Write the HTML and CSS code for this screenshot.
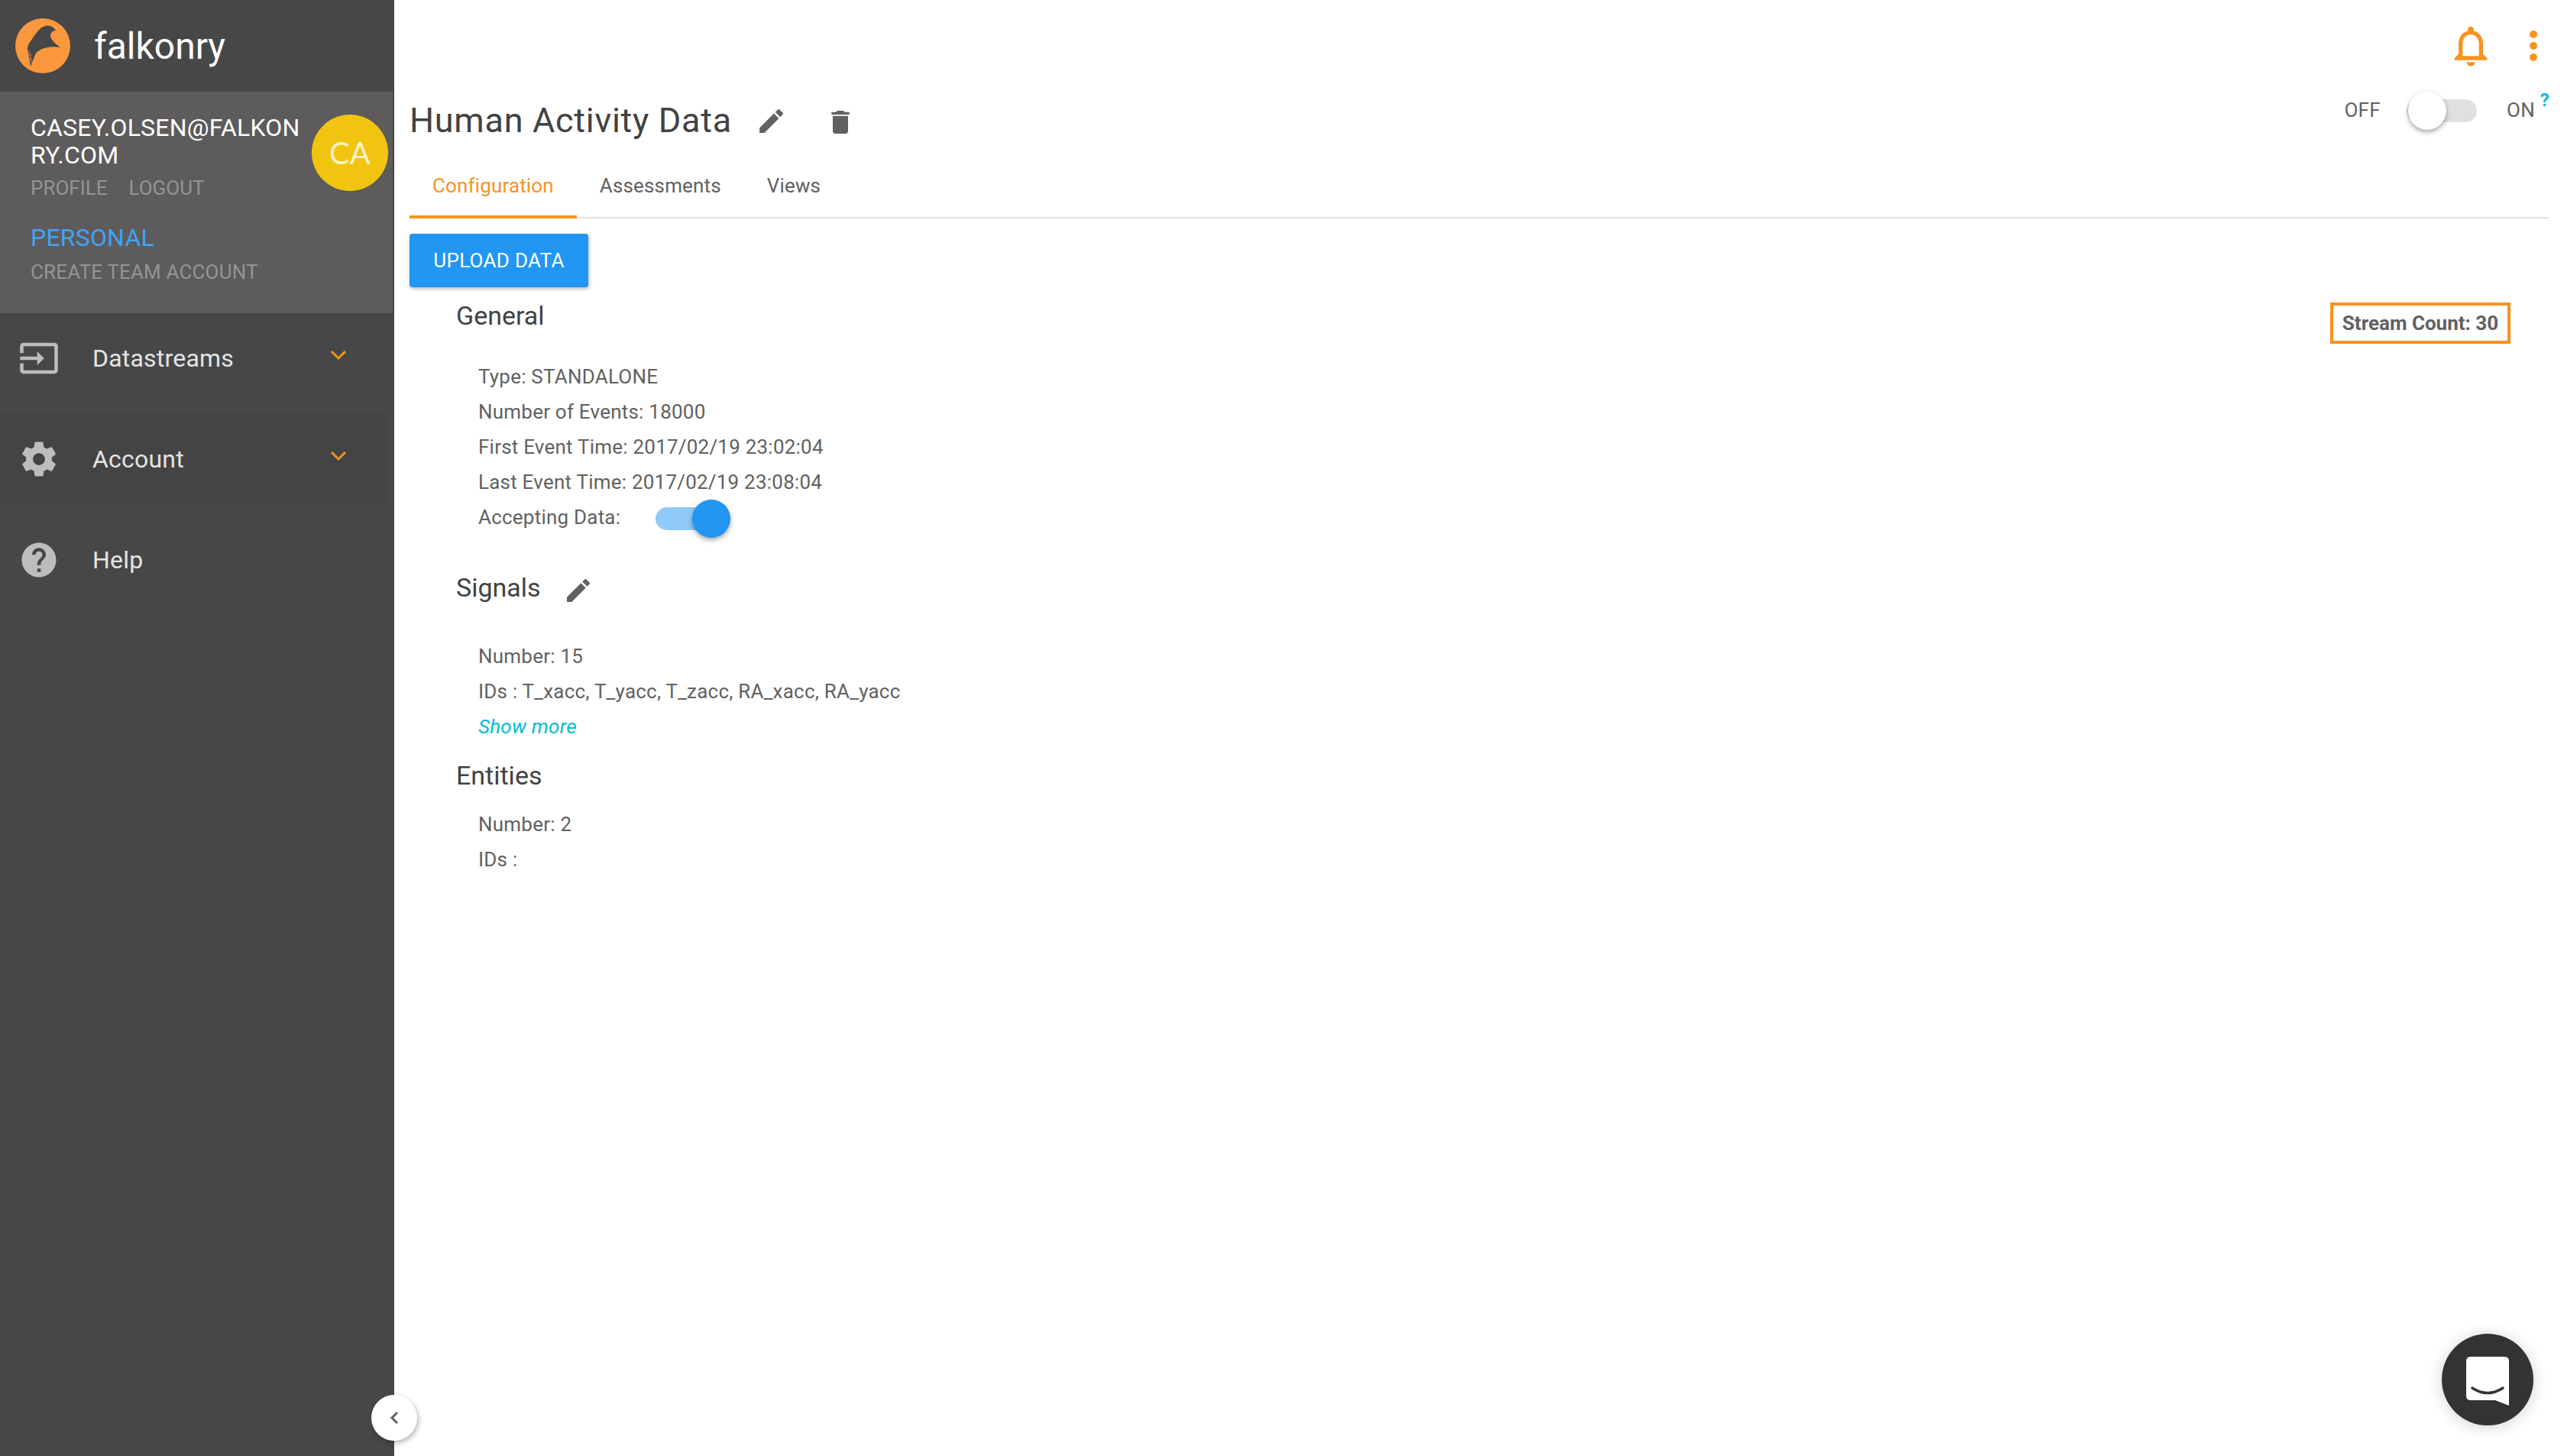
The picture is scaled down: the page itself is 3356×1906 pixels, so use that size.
FILE: index.html
```html
<!DOCTYPE html>
<html lang="en">
<head>
    <meta charset="UTF-8">
    <title>Falkonry - Human Activity Data</title>
    <link rel="stylesheet" href="styles.css">
</head>
<body>

<div class="app">

    <aside class="sidebar">
        <div class="brand">
            <svg class="brand-logo" viewBox="20 24 72 72">
                <circle cx="56" cy="60" r="36" fill="#fb973d"/>
                <path d="M40 87 L36 66 Q35 60 40 54 Q47 43 53 37 Q60 32 66 34 Q71 36 73 40 Q67 40 66 46 Q66 53 79 62 Q65 60 55 64 Q48 67 46 72 Z" fill="#474747"/>
                <path d="M36 66 L41 73 M37 71 L42 78 M38 76 L42 82" stroke="#fb973d" stroke-width="1" fill="none"/>
            </svg>
            <span class="brand-name">falkonry</span>
        </div>

        <div class="profile">
            <div class="profile-top">
                <div class="profile-info">
                    <div class="profile-email">CASEY.OLSEN@FALKON<br>RY.COM</div>
                    <div class="profile-links"><span>PROFILE</span><span>LOGOUT</span></div>
                </div>
                <div class="avatar">CA</div>
            </div>
            <div class="profile-account">PERSONAL</div>
            <div class="profile-create">CREATE TEAM ACCOUNT</div>
        </div>

        <nav class="nav">
            <div class="nav-item">
                <svg class="nav-icon" viewBox="0 0 24 24"><path d="M21 3.01H3c-1.1 0-2 .9-2 2V9h2V4.99h18v14.03H3V15H1v4.01c0 1.1.9 1.98 2 1.98h18c1.1 0 2-.88 2-1.98v-14c0-1.11-.9-2-2-2zM11 16l4-4-4-4v3H1v2h10v3z"/></svg>
                <span>Datastreams</span>
                <svg class="nav-chevron" viewBox="0 0 22 14"><path d="M2 2 L11 11 L20 2"/></svg>
            </div>
            <div class="nav-item nav-item-active">
                <svg class="nav-icon" viewBox="0 0 24 24"><path d="M19.43 12.98c.04-.32.07-.64.07-.98s-.03-.66-.07-.98l2.11-1.65c.19-.15.24-.42.12-.64l-2-3.46c-.12-.22-.39-.3-.61-.22l-2.49 1c-.52-.4-1.08-.73-1.69-.98l-.38-2.65C14.46 2.18 14.25 2 14 2h-4c-.25 0-.46.18-.49.42l-.38 2.65c-.61.25-1.17.59-1.69.98l-2.49-1c-.23-.09-.49 0-.61.22l-2 3.46c-.13.22-.07.49.12.64l2.11 1.65c-.04.32-.07.65-.07.98s.03.66.07.98l-2.11 1.65c-.19.15-.24.42-.12.64l2 3.46c.12.22.39.3.61.22l2.49-1c.52.4 1.08.73 1.69.98l.38 2.65c.03.24.24.42.49.42h4c.25 0 .46-.18.49-.42l.38-2.65c.61-.25 1.17-.59 1.69-.98l2.49 1c.23.09.49 0 .61-.22l2-3.46c.12-.22.07-.49-.12-.64l-2.11-1.65zM12 15.5c-1.93 0-3.5-1.57-3.5-3.5s1.57-3.5 3.5-3.5 3.5 1.57 3.5 3.5-1.57 3.5-3.5 3.5z"/></svg>
                <span>Account</span>
                <svg class="nav-chevron" viewBox="0 0 22 14"><path d="M2 2 L11 11 L20 2"/></svg>
            </div>
            <div class="nav-item">
                <svg class="nav-icon" viewBox="0 0 24 24"><path d="M12 2C6.48 2 2 6.48 2 12s4.48 10 10 10 10-4.48 10-10S17.52 2 12 2zm1 17h-2v-2h2v2zm2.07-7.75l-.9.92C13.45 12.9 13 13.5 13 15h-2v-.5c0-1.1.45-2.1 1.17-2.83l1.24-1.26c.37-.36.59-.86.59-1.41 0-1.1-.9-2-2-2s-2 .9-2 2H8c0-2.21 1.79-4 4-4s4 1.79 4 4c0 .88-.36 1.68-.93 2.25z"/></svg>
                <span>Help</span>
            </div>
        </nav>

        <button class="collapse-btn">
            <svg viewBox="0 0 12 18"><path d="M10 2 L3 9 L10 16"/></svg>
        </button>
    </aside>

    <main class="main">

        <div class="content">
            <div class="title-row">
                <h1>Human Activity Data</h1>
                <svg class="icon-edit" viewBox="0 0 24 24"><path d="M3 17.25V21h3.75L17.81 9.94l-3.75-3.75L3 17.25zM20.71 7.04c.39-.39.39-1.02 0-1.41l-2.34-2.34c-.39-.39-1.02-.39-1.41 0l-1.83 1.83 3.75 3.75 1.83-1.83z"/></svg>
                <svg class="icon-trash" viewBox="0 0 24 24"><path d="M6 19c0 1.1.9 2 2 2h8c1.1 0 2-.9 2-2V7H6v12zM19 4h-3.5l-1-1h-5l-1 1H5v2h14V4z"/></svg>
            </div>

            <div class="tabs">
                <div class="tab tab-active">Configuration</div>
                <div class="tab">Assessments</div>
                <div class="tab">Views</div>
            </div>

            <button class="upload-btn">UPLOAD DATA</button>

            <section class="section">
                <h2>General</h2>
                <div class="rows">
                    <div class="row">Type: STANDALONE</div>
                    <div class="row">Number of Events: 18000</div>
                    <div class="row">First Event Time: 2017/02/19 23:02:04</div>
                    <div class="row">Last Event Time: 2017/02/19 23:08:04</div>
                    <div class="row row-toggle">
                        Accepting Data:
                        <span class="switch switch-on"><span class="switch-thumb"></span></span>
                    </div>
                </div>
            </section>

            <section class="section section-signals">
                <h2>Signals <svg class="icon-edit" viewBox="0 0 24 24"><path d="M3 17.25V21h3.75L17.81 9.94l-3.75-3.75L3 17.25zM20.71 7.04c.39-.39.39-1.02 0-1.41l-2.34-2.34c-.39-.39-1.02-.39-1.41 0l-1.83 1.83 3.75 3.75 1.83-1.83z"/></svg></h2>
                <div class="rows rows-signals">
                    <div class="row">Number: 15</div>
                    <div class="row">IDs : T_xacc, T_yacc, T_zacc, RA_xacc, RA_yacc</div>
                    <div class="row show-more">Show more</div>
                </div>
            </section>

            <section class="section section-entities">
                <h2>Entities</h2>
                <div class="rows rows-entities">
                    <div class="row">Number: 2</div>
                    <div class="row">IDs :</div>
                </div>
            </section>
        </div>

        <div class="side-tools">
            <div class="top-icons">
                <svg class="icon-bell" viewBox="0 0 24 24"><path d="M12 22c1.1 0 2-.9 2-2h-4c0 1.1.89 2 2 2zm6-6v-5c0-3.07-1.64-5.64-4.5-6.32V4c0-.83-.67-1.5-1.5-1.5s-1.5.67-1.5 1.5v.68C7.63 5.36 6 7.92 6 11v5l-2 2v1h16v-1l-2-2zm-2 1H8v-6c0-2.48 1.51-4.5 4-4.5s4 2.02 4 4.5v6z"/></svg>
                <svg class="icon-dots" viewBox="0 0 10 40"><circle cx="5" cy="5" r="5"/><circle cx="5" cy="20" r="5"/><circle cx="5" cy="35" r="5"/></svg>
            </div>
            <div class="mode-toggle">
                <span>OFF</span>
                <span class="switch"><span class="switch-thumb"></span></span>
                <span class="mode-on">ON<sup>?</sup></span>
            </div>
            <div class="stream-count">Stream Count: 30</div>
        </div>

    </main>

</div>

<div class="chat-launcher">
    <svg viewBox="0 0 56 64"><path d="M6 0 H50 Q56 0 56 6 V64 L38 57 H6 Q0 57 0 51 V6 Q0 0 6 0 Z" fill="#fff"/><path d="M8 41 Q28 54 48 41" fill="none" stroke="#333" stroke-width="3.4" stroke-linecap="round"/></svg>
</div>

</body>
</html>
```

FILE: styles.css
```css
* {
    box-sizing: border-box;
}

html, body {
    margin: 0;
    height: 100%;
    overflow: hidden;
}

body {
    font-family: Roboto, "Liberation Sans", sans-serif;
    color: #616161;
    background: #ffffff;
}

.app {
    display: flex;
    height: 1906px;
}

/* sidebar */

.sidebar {
    position: relative;
    width: 516px;
    flex: none;
    background: #474747;
}

.brand {
    display: flex;
    align-items: center;
    height: 120px;
    padding-left: 20px;
}

.brand-logo {
    width: 72px;
    height: 72px;
}

.brand-name {
    margin-left: 31px;
    font-size: 48px;
    color: #ffffff;
}

.profile {
    width: 514px;
    height: 290px;
    padding: 28px 6px 0 40px;
    background: #5d5b5c;
}

.profile-top {
    display: flex;
    justify-content: space-between;
}

.profile-email {
    padding-top: 1px;
    font-size: 32px;
    line-height: 36px;
    letter-spacing: 0.2px;
    color: #ffffff;
}

.profile-links {
    display: flex;
    gap: 28px;
    margin-top: 7px;
    font-size: 26px;
    line-height: 36px;
    color: #949494;
}

.avatar {
    display: flex;
    align-items: center;
    justify-content: center;
    width: 100px;
    height: 100px;
    margin-top: 2px;
    border-radius: 50%;
    background: #f1c40f;
    color: #fdf3c6;
    font-family: Lato, sans-serif;
    font-size: 40px;
}

.profile-account {
    margin-top: 27px;
    font-size: 32px;
    line-height: 40px;
    letter-spacing: 0.2px;
    color: #3fa4f4;
}

.profile-create {
    margin-top: 7px;
    font-size: 26px;
    line-height: 36px;
    letter-spacing: 0.15px;
    color: #949494;
}

.nav {
    display: flex;
    flex-direction: column;
    gap: 14px;
}

.nav-item {
    display: flex;
    align-items: center;
    width: 506px;
    height: 118px;
    padding-left: 24px;
    font-size: 32px;
    letter-spacing: 0.2px;
    color: #e4e4e4;
}

.nav-item-active {
    background: #444444;
}

.nav-icon {
    width: 54px;
    height: 54px;
    margin-right: 43px;
    fill: #bdbdbd;
}

.nav-chevron {
    width: 22px;
    height: 14px;
    margin-left: auto;
    margin-right: 52px;
    margin-bottom: 9px;
    fill: none;
    stroke: #f7931e;
    stroke-width: 3;
}

.collapse-btn {
    position: absolute;
    left: 486px;
    top: 1826px;
    width: 60px;
    height: 60px;
    padding: 0;
    border: none;
    border-radius: 50%;
    background: #ffffff;
    box-shadow: 2px 3px 6px rgba(0, 0, 0, 0.28);
    z-index: 2;
}

.collapse-btn svg {
    display: block;
    width: 12px;
    height: 18px;
    margin: 0 auto;
    fill: none;
    stroke: #616161;
    stroke-width: 3;
}

/* main area */

.main {
    flex: 1;
    display: grid;
}

.content,
.side-tools {
    grid-area: 1 / 1;
}

.content {
    padding: 125px 20px 0 20px;
}

.title-row {
    display: flex;
    align-items: center;
    height: 64px;
}

h1 {
    margin: 0;
    font-size: 45px;
    font-weight: 400;
    letter-spacing: 0.7px;
    color: #424242;
}

.title-row .icon-edit {
    width: 41px;
    height: 41px;
    margin: 3px 0 0 31px;
    fill: #616161;
}

.icon-trash {
    width: 40px;
    height: 40px;
    margin: 6px 0 0 50px;
    fill: #616161;
}

.tabs {
    display: flex;
    height: 97px;
    margin-top: 0;
    border-bottom: 2px solid #e0e0e0;
}

.tab {
    height: 97px;
    padding: 32px 30px 0 30px;
    font-size: 26px;
    line-height: 44px;
    letter-spacing: 0.15px;
}

.tab-active {
    border-bottom: 4px solid #f7931e;
    color: #f7931e;
}

.upload-btn {
    display: block;
    width: 234px;
    height: 70px;
    margin-top: 20px;
    padding: 0;
    border: none;
    border-radius: 4px;
    background: #2196f3;
    color: #ffffff;
    font-family: inherit;
    font-size: 26px;
    letter-spacing: 0.3px;
    box-shadow: 1px 2px 5px rgba(0, 0, 0, 0.3);
}

.section {
    padding-left: 61px;
}

h2 {
    display: flex;
    align-items: center;
    height: 46px;
    margin: 16px 0 0 0;
    padding-bottom: 4px;
    font-size: 34px;
    font-weight: 400;
    color: #424242;
}

h2 .icon-edit {
    width: 40px;
    height: 40px;
    margin: 7px 0 0 29px;
    fill: #616161;
}

.rows {
    margin-top: 32px;
    padding-left: 29px;
}

.row {
    font-size: 26px;
    line-height: 46px;
    letter-spacing: 0.22px;
}

.row-toggle {
    display: flex;
    align-items: center;
}

.row-toggle .switch {
    margin: 3px 0 0 46px;
}

.section-signals h2 {
    margin-top: 48px;
}

.rows-signals {
    margin-top: 42px;
}

.show-more {
    font-style: italic;
    color: #00bcd4;
}

.section-entities h2 {
    margin-top: 20px;
}

.rows-entities {
    margin-top: 16px;
}

/* toggles */

.switch {
    position: relative;
    display: inline-block;
    width: 92px;
    height: 30px;
    border-radius: 15px;
    background: #e0e0e0;
}

.switch-thumb {
    position: absolute;
    left: 2px;
    top: -10px;
    width: 50px;
    height: 50px;
    border-radius: 50%;
    background: #ffffff;
    box-shadow: 0 3px 6px rgba(0, 0, 0, 0.35);
}

.switch-on {
    width: 98px;
    background: #90caf9;
}

.switch-on .switch-thumb {
    left: 48px;
    background: #2196f3;
}

/* right hand tools */

.side-tools {
    display: flex;
    flex-direction: column;
    align-items: flex-end;
    justify-self: end;
}

.top-icons {
    display: flex;
    align-items: flex-start;
    height: 120px;
    padding: 28px 35px 0 0;
}

.icon-bell {
    width: 64px;
    height: 64px;
    fill: #f7931e;
}

.icon-dots {
    width: 10px;
    height: 40px;
    margin: 12px 0 0 45px;
    fill: #f7931e;
}

.mode-toggle {
    display: flex;
    align-items: center;
    height: 50px;
    margin-right: 19px;
    font-size: 26px;
    letter-spacing: 0.3px;
}

.mode-toggle > span:first-child {
    margin-top: -3px;
}

.mode-toggle .switch {
    margin: 0 39px 0 34px;
}

.mode-on {
    position: relative;
    margin-top: -3px;
    padding-right: 19px;
}

.mode-on sup {
    position: absolute;
    right: 0;
    top: -12px;
    font-size: 24px;
    font-weight: 700;
    color: #00bcd4;
}

.stream-count {
    width: 236px;
    height: 54px;
    margin: 226px 70px 0 0;
    border: 4px solid #f7931e;
    font-size: 26px;
    font-weight: 700;
    line-height: 46px;
    text-align: center;
    white-space: nowrap;
}

/* chat bubble */

.chat-launcher {
    position: fixed;
    left: 3196px;
    top: 1746px;
    display: flex;
    align-items: center;
    justify-content: center;
    width: 120px;
    height: 120px;
    padding-top: 4px;
    border-radius: 50%;
    background: #333333;
    box-shadow: 0 2px 20px rgba(0, 0, 0, 0.18);
}

.chat-launcher svg {
    width: 56px;
    height: 64px;
}
```
